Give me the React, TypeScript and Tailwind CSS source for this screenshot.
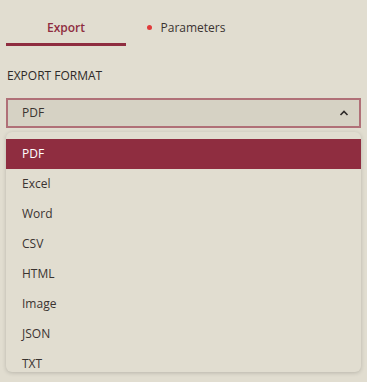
export default function App() {
  const formats = ['PDF', 'Excel', 'Word', 'CSV', 'HTML', 'Image', 'JSON', 'TXT'];

  return (
    <div className="w-[367px] h-[382px] overflow-hidden bg-[#e1ddd0] px-[6px] pt-[12px] font-['Open_Sans',sans-serif] text-[#3a3330]">
      <div className="flex">
        <div className="w-[120px] h-[34px] flex items-center justify-center text-[12px] font-semibold text-[#8f2d40] border-b-[3px] border-[#8f2d40]">
          Export
        </div>
        <div className="w-[120px] h-[34px] flex items-center justify-center gap-[9px] text-[12px] border-b-[3px] border-transparent">
          <span className="w-[5px] h-[5px] rounded-full bg-[#e03a3a]" />
          Parameters
        </div>
      </div>

      <div className="mt-[21px] text-[12px] text-[#2e2a28] pl-[1px]">EXPORT FORMAT</div>

      <div className="mt-[13px] h-[30px] flex items-center justify-between border-2 border-[#b07077] bg-[#d6d2c4] pl-[14px] pr-[10px] text-[12px]">
        <span>PDF</span>
        <svg width="10" height="6" viewBox="0 0 10 6" fill="none" stroke="#2e2a28" strokeWidth="1.6">
          <path d="M1.5 5 L5 1.5 L8.5 5" />
        </svg>
      </div>

      <div className="mt-[4px] h-[240px] overflow-hidden rounded-[6px] bg-[#e1ddd0] shadow-[0_1px_4px_rgba(0,0,0,0.18)] pt-[7px]">
        {formats.map((f, i) => (
          <div
            key={f}
            className={
              i === 0
                ? 'h-[30px] flex items-center pl-[16px] text-[12px] bg-[#8f2d40] text-white'
                : 'h-[30px] flex items-center pl-[16px] text-[12px]'
            }
          >
            {f}
          </div>
        ))}
      </div>
    </div>
  );
}
